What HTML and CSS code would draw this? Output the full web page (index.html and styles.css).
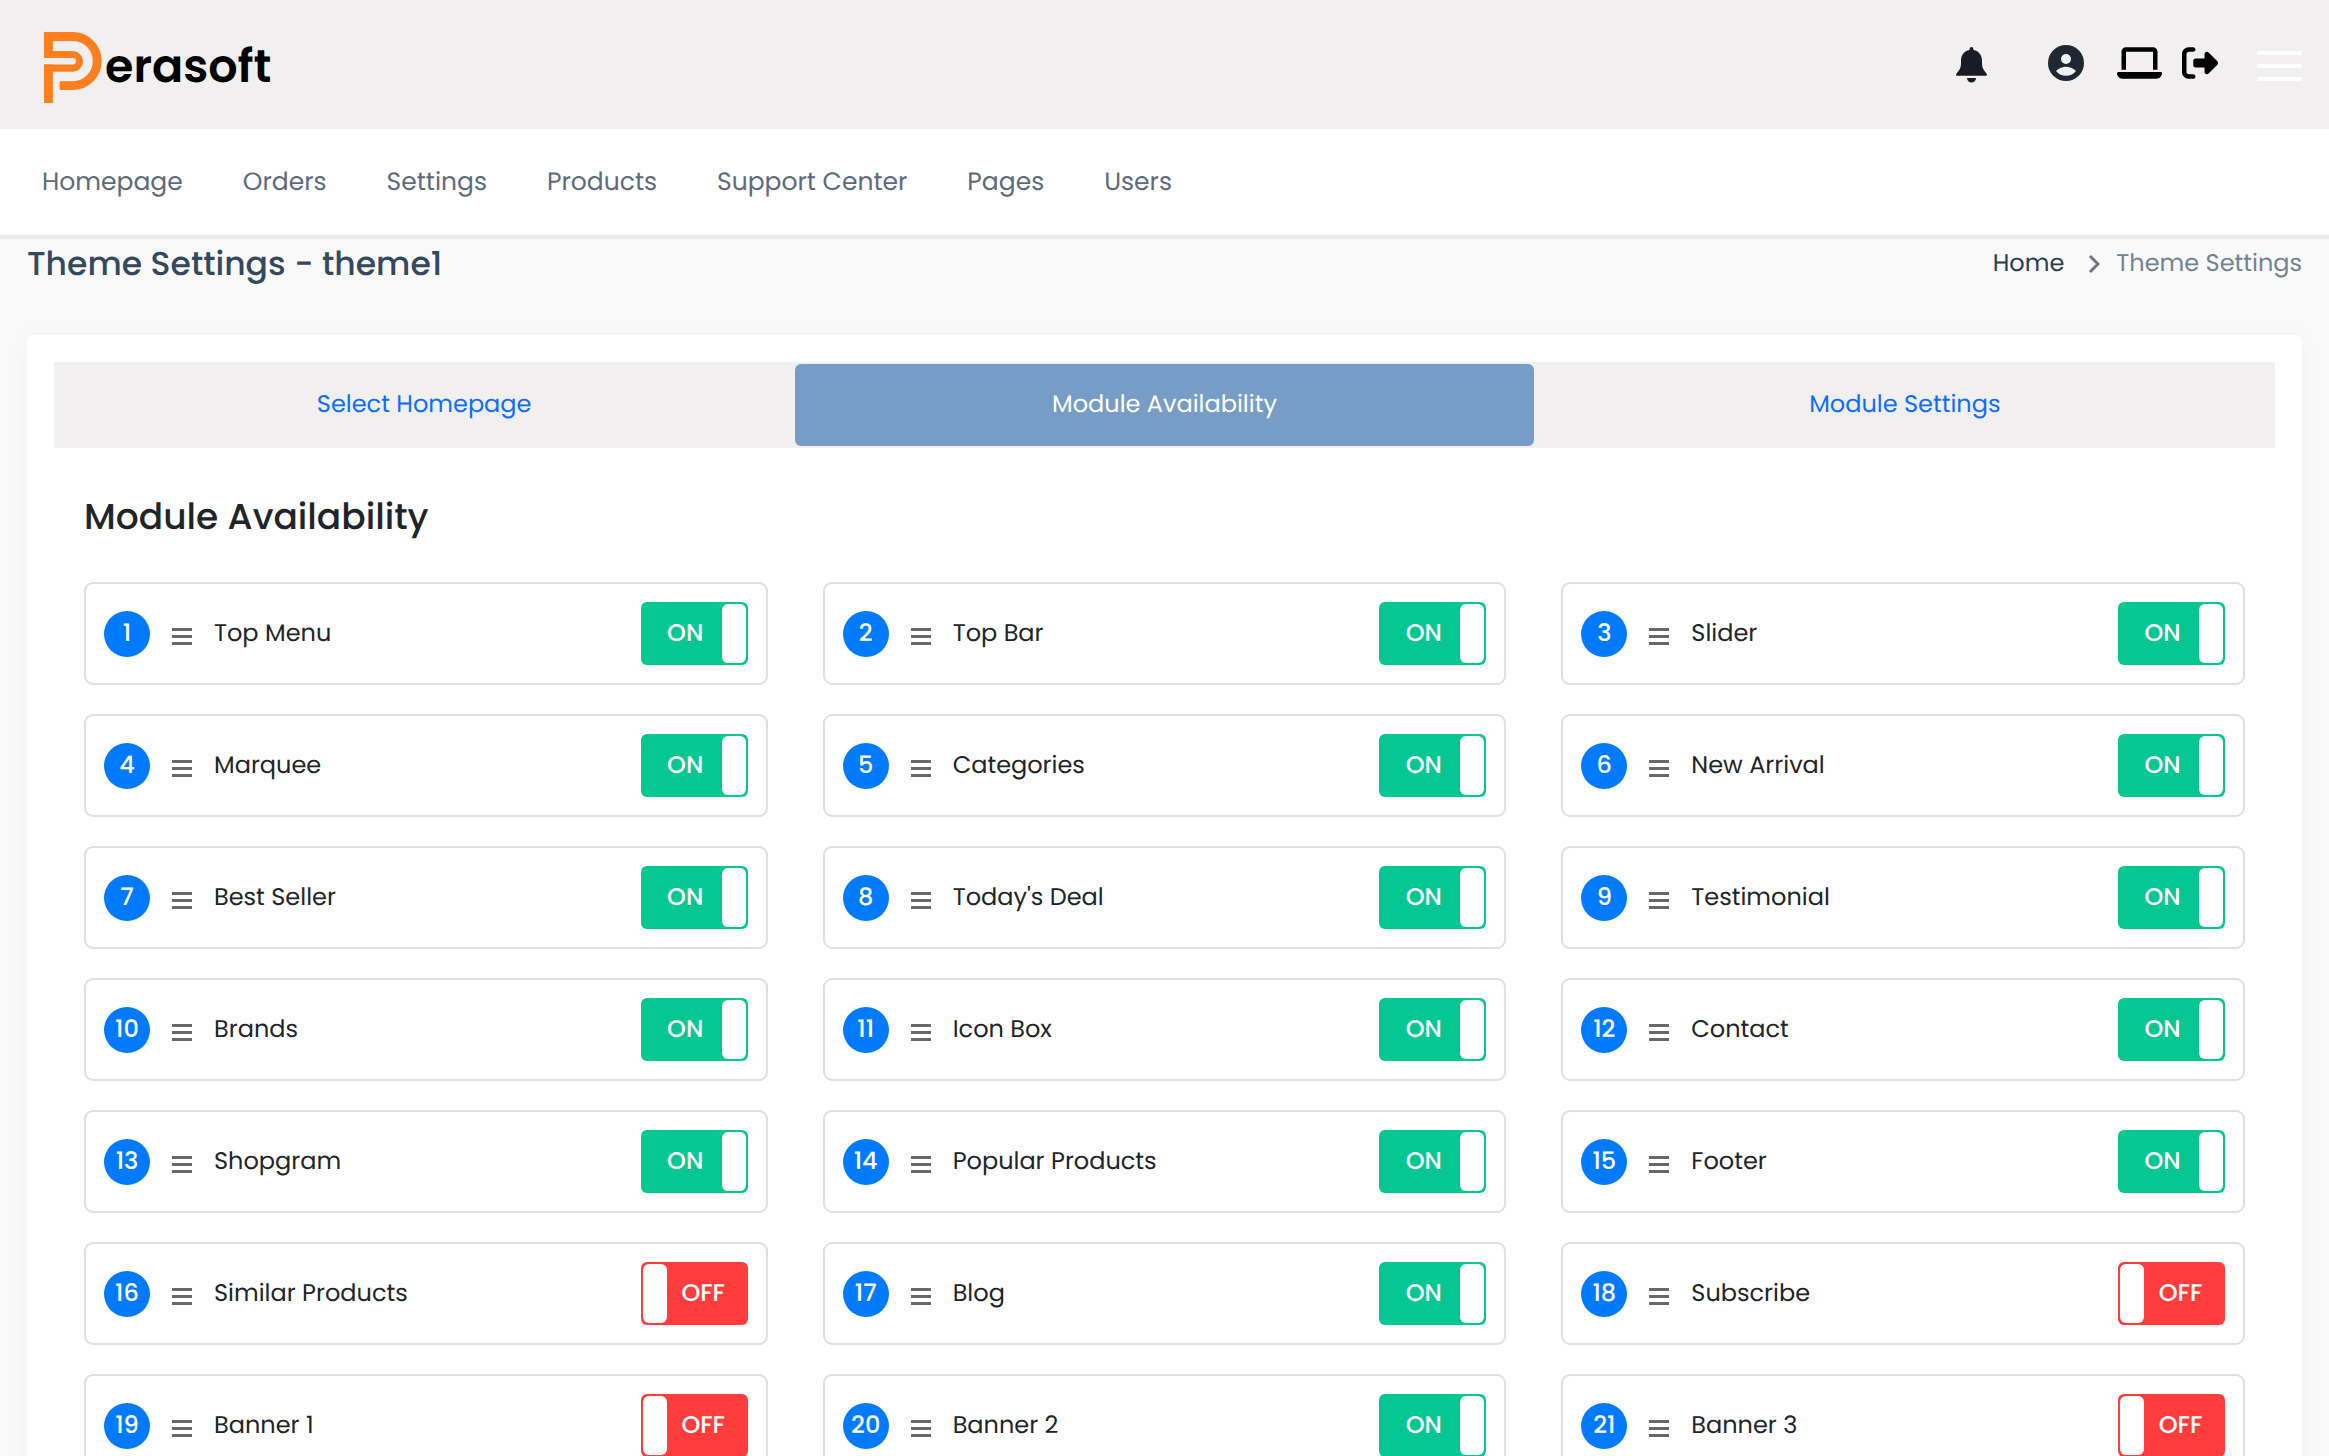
FILE: index.html
```html
<!DOCTYPE html>
<html lang="en">

<head>
  <meta charset="utf-8">
  <title>Theme Settings</title>
  <link rel="stylesheet" href="styles.css">
</head>

<body>
  <header class="topbar">
    <a class="logo" href="#">
      <svg class="logo-mark" viewBox="134 98 170 208" fill="none" stroke="#ff7f1e" aria-hidden="true">
        <path stroke-width="26" d="M147 174V111H218A72 72 0 0 1 218 255H180M147 193V306" />
        <path stroke-width="21" d="M134 164H218A20 20 0 0 1 218 204H134" />
      </svg>
      <span class="logo-text">erasoft</span>
    </a>
    <div class="topbar-icons">
      <a class="icon-bell" href="#" aria-label="Notifications">
        <svg width="31" height="36" viewBox="0 0 31 36" fill="#171c26">
          <path d="M15.500 0C14 0 13.500 1.500 13.500 3C8 4 5 8.500 5 14V17C5 21 3 23.500 1 26C-.5 27.500 0 28.700 1.500 28.700H29.500C31 28.700 31.500 27.500 30 26C28 23.500 26 21 26 17V14C26 8.500 23 4 17.500 3C17.500 1.500 17 0 15.500 0zM11 31H20C20 33.500 18 35.500 15.500 35.500S11 33.500 11 31z" />
        </svg>
      </a>
      <a class="icon-user" href="#" aria-label="Account">
        <svg width="36" height="36" viewBox="0 0 36 36">
          <circle cx="18" cy="18" r="18" fill="#1f2733" />
          <circle cx="18" cy="14" r="5" fill="#f1eff0" />
          <path d="M8 26C11 23 15 21.700 18 21.700S25 23 28 26C25 29.500 22 30.800 18 30.800S11 29.500 8 26z" fill="#f1eff0" />
        </svg>
      </a>
      <a class="icon-site" href="#" aria-label="View site">
        <svg width="45" height="36" viewBox="0 0 640 512">
          <path d="M128 32C92.700 32 64 60.700 64 96V352h64V96H512V352h64V96c0-35.300-28.700-64-64-64H128zM19.200 384C8.600 384 0 392.600 0 403.200C0 445.600 34.400 480 76.800 480H563.200c42.400 0 76.800-34.400 76.800-76.800c0-10.600-8.600-19.200-19.200-19.200H19.200z" />
        </svg>
      </a>
      <a class="icon-logout" href="#" aria-label="Log out">
        <svg width="36" height="36" viewBox="0 0 512 512">
          <path d="M377.900 105.900L500.700 228.700c7.200 7.200 11.300 17.100 11.300 27.300s-4.100 20.100-11.300 27.300L377.900 406.100c-6.400 6.400-15 9.900-24 9.900c-18.700 0-33.900-15.200-33.900-33.900l0-62.100-128 0c-17.700 0-32-14.300-32-32l0-64c0-17.700 14.300-32 32-32l128 0 0-62.100c0-18.700 15.200-33.900 33.900-33.900c9 0 17.600 3.600 24 9.900zM160 96L96 96c-17.700 0-32 14.300-32 32l0 256c0 17.700 14.300 32 32 32l64 0c17.700 0 32 14.300 32 32s-14.300 32-32 32l-64 0c-53 0-96-43-96-96L0 128C0 75 43 32 96 32l64 0c17.700 0 32 14.300 32 32s-14.300 32-32 32z" />
        </svg>
      </a>
      <button class="menu-toggle" type="button" aria-label="Menu">
        <span></span><span></span><span></span>
      </button>
    </div>
  </header>

  <nav class="main-nav">
    <a href="#">Homepage</a>
    <a href="#">Orders</a>
    <a href="#">Settings</a>
    <a href="#">Products</a>
    <a href="#">Support Center</a>
    <a href="#">Pages</a>
    <a href="#">Users</a>
  </nav>

  <main class="content">
    <div class="page-title">
      <h1>Theme Settings - theme1</h1>
      <div class="breadcrumb">
        <a href="#">Home</a>
        <svg width="12" height="20" viewBox="0 0 12 20" fill="none" stroke="#6f757d" stroke-width="3" aria-hidden="true">
          <path d="M2 2L10 10L2 18" />
        </svg>
        <span>Theme Settings</span>
      </div>
    </div>

    <section class="card">
      <div class="tabs">
        <button type="button">Select Homepage</button>
        <button type="button" class="active">Module Availability</button>
        <button type="button">Module Settings</button>
      </div>

      <div class="tab-content">
        <h2>Module Availability</h2>
        <div class="modules">
          <div class="module">
            <span class="number">1</span><span class="handle"></span><label class="name" for="m1">Top Menu</label>
            <label class="switch"><input type="checkbox" id="m1" checked><span class="on">ON</span><span class="off">OFF</span></label>
          </div>
          <div class="module">
            <span class="number">2</span><span class="handle"></span><label class="name" for="m2">Top Bar</label>
            <label class="switch"><input type="checkbox" id="m2" checked><span class="on">ON</span><span class="off">OFF</span></label>
          </div>
          <div class="module">
            <span class="number">3</span><span class="handle"></span><label class="name" for="m3">Slider</label>
            <label class="switch"><input type="checkbox" id="m3" checked><span class="on">ON</span><span class="off">OFF</span></label>
          </div>
          <div class="module">
            <span class="number">4</span><span class="handle"></span><label class="name" for="m4">Marquee</label>
            <label class="switch"><input type="checkbox" id="m4" checked><span class="on">ON</span><span class="off">OFF</span></label>
          </div>
          <div class="module">
            <span class="number">5</span><span class="handle"></span><label class="name" for="m5">Categories</label>
            <label class="switch"><input type="checkbox" id="m5" checked><span class="on">ON</span><span class="off">OFF</span></label>
          </div>
          <div class="module">
            <span class="number">6</span><span class="handle"></span><label class="name" for="m6">New Arrival</label>
            <label class="switch"><input type="checkbox" id="m6" checked><span class="on">ON</span><span class="off">OFF</span></label>
          </div>
          <div class="module">
            <span class="number">7</span><span class="handle"></span><label class="name" for="m7">Best Seller</label>
            <label class="switch"><input type="checkbox" id="m7" checked><span class="on">ON</span><span class="off">OFF</span></label>
          </div>
          <div class="module">
            <span class="number">8</span><span class="handle"></span><label class="name" for="m8">Today's Deal</label>
            <label class="switch"><input type="checkbox" id="m8" checked><span class="on">ON</span><span class="off">OFF</span></label>
          </div>
          <div class="module">
            <span class="number">9</span><span class="handle"></span><label class="name" for="m9">Testimonial</label>
            <label class="switch"><input type="checkbox" id="m9" checked><span class="on">ON</span><span class="off">OFF</span></label>
          </div>
          <div class="module">
            <span class="number">10</span><span class="handle"></span><label class="name" for="m10">Brands</label>
            <label class="switch"><input type="checkbox" id="m10" checked><span class="on">ON</span><span class="off">OFF</span></label>
          </div>
          <div class="module">
            <span class="number">11</span><span class="handle"></span><label class="name" for="m11">Icon Box</label>
            <label class="switch"><input type="checkbox" id="m11" checked><span class="on">ON</span><span class="off">OFF</span></label>
          </div>
          <div class="module">
            <span class="number">12</span><span class="handle"></span><label class="name" for="m12">Contact</label>
            <label class="switch"><input type="checkbox" id="m12" checked><span class="on">ON</span><span class="off">OFF</span></label>
          </div>
          <div class="module">
            <span class="number">13</span><span class="handle"></span><label class="name" for="m13">Shopgram</label>
            <label class="switch"><input type="checkbox" id="m13" checked><span class="on">ON</span><span class="off">OFF</span></label>
          </div>
          <div class="module">
            <span class="number">14</span><span class="handle"></span><label class="name" for="m14">Popular Products</label>
            <label class="switch"><input type="checkbox" id="m14" checked><span class="on">ON</span><span class="off">OFF</span></label>
          </div>
          <div class="module">
            <span class="number">15</span><span class="handle"></span><label class="name" for="m15">Footer</label>
            <label class="switch"><input type="checkbox" id="m15" checked><span class="on">ON</span><span class="off">OFF</span></label>
          </div>
          <div class="module">
            <span class="number">16</span><span class="handle"></span><label class="name" for="m16">Similar Products</label>
            <label class="switch"><input type="checkbox" id="m16"><span class="on">ON</span><span class="off">OFF</span></label>
          </div>
          <div class="module">
            <span class="number">17</span><span class="handle"></span><label class="name" for="m17">Blog</label>
            <label class="switch"><input type="checkbox" id="m17" checked><span class="on">ON</span><span class="off">OFF</span></label>
          </div>
          <div class="module">
            <span class="number">18</span><span class="handle"></span><label class="name" for="m18">Subscribe</label>
            <label class="switch"><input type="checkbox" id="m18"><span class="on">ON</span><span class="off">OFF</span></label>
          </div>
          <div class="module">
            <span class="number">19</span><span class="handle"></span><label class="name" for="m19">Banner 1</label>
            <label class="switch"><input type="checkbox" id="m19"><span class="on">ON</span><span class="off">OFF</span></label>
          </div>
          <div class="module">
            <span class="number">20</span><span class="handle"></span><label class="name" for="m20">Banner 2</label>
            <label class="switch"><input type="checkbox" id="m20" checked><span class="on">ON</span><span class="off">OFF</span></label>
          </div>
          <div class="module">
            <span class="number">21</span><span class="handle"></span><label class="name" for="m21">Banner 3</label>
            <label class="switch"><input type="checkbox" id="m21"><span class="on">ON</span><span class="off">OFF</span></label>
          </div>
        </div>
      </div>
    </section>
  </main>
</body>

</html>
```
FILE: styles.css
```css
* {
  box-sizing: border-box;
}

body {
  margin: 0;
  font-family: Poppins, Inter, sans-serif;
  font-size: 24px;
  line-height: 36px;
  color: #212529;
  background-color: #f9f9f9;
  text-rendering: geometricPrecision;
}

a {
  text-decoration: none;
}

button {
  font: inherit;
  text-rendering: inherit;
  border: 0;
  cursor: pointer;
}

svg {
  display: block;
}

/* header */
.topbar {
  display: flex;
  justify-content: space-between;
  padding: 32px 27px 26px 44px;
  background-color: #f1eff0;
}

.logo {
  display: flex;
  gap: 3px;
  color: black;
}

.logo-mark {
  width: 58px;
  height: 71px;
}

.logo-text {
  font-size: 46px;
  font-weight: 600;
  line-height: 70px;
}

.topbar-icons {
  display: flex;
  align-items: flex-start;
  padding-top: 13px;
}

.icon-bell {
  margin-right: 61px;
  padding-top: 2px;
}

.icon-user {
  margin-right: 33px;
}

.icon-site {
  margin-right: 20px;
}

.icon-logout {
  margin-right: 39px;
}

.menu-toggle {
  display: flex;
  flex-direction: column;
  gap: 9px;
  margin-top: 6px;
  padding: 0;
  background: none;
}

.menu-toggle span {
  width: 45px;
  height: 4px;
  background-color: #fdfdfd;
}

/* navigation */
.main-nav {
  display: flex;
  gap: 60px;
  padding: 35px 42px;
  font-size: 25px;
  background-color: white;
  border-bottom: 4px solid #ebebeb;
}

.main-nav a {
  color: #5f6b7c;
}

/* page title */
.content {
  padding: 0 27px 27px;
}

.page-title {
  display: flex;
  justify-content: space-between;
  align-items: center;
  margin-bottom: 46px;
}

h1 {
  margin: 0;
  font-size: 33px;
  font-weight: 500;
  line-height: 50px;
  color: #34495e;
}

.breadcrumb {
  display: flex;
  align-items: center;
  color: #748291;
}

.breadcrumb a {
  color: #2c3e50;
}

.breadcrumb svg {
  margin: 0 16px 0 24px;
}

.card {
  padding: 27px;
  background-color: white;
  border-radius: 6px;
  box-shadow: 0 0 24px rgba(0, 0, 0, 0.03);
}

/* tabs */
.tabs {
  display: grid;
  grid-template-columns: repeat(3, 1fr);
  gap: 2px;
  padding: 2px 1px;
  background-color: #f1eff0;
}

.tabs button {
  padding: 23px 12px;
  color: #0d6efd;
  background: none;
  border-radius: 6px;
}

.tabs .active {
  color: white;
  background-color: #779dc7;
}

.tab-content {
  padding: 42px 30px 30px;
}

h2 {
  margin: 0 0 38px;
  font-size: 36px;
  font-weight: 500;
  line-height: 54px;
}

/* modules */
.modules {
  display: grid;
  grid-template-columns: repeat(3, 1fr);
  gap: 29px 55px;
}

.module {
  display: flex;
  align-items: center;
  padding: 18px;
  border: 2px solid #dee0e1;
  border-radius: 9px;
}

.number {
  width: 46px;
  height: 46px;
  font-weight: 500;
  line-height: 46px;
  text-align: center;
  color: white;
  background-color: #007bff;
  border-radius: 50%;
}

.handle {
  width: 20px;
  height: 17px;
  margin: 5px 22px 0;
  background: repeating-linear-gradient(#696969 0 3px, transparent 3px 7px);
  cursor: move;
}

.name {
  flex: 1;
}

.switch {
  display: flex;
  width: 107px;
  height: 63px;
  padding: 2px;
  font-weight: 500;
  color: white;
  background-color: #ff3d3d;
  border-radius: 6px;
  cursor: pointer;
}

.switch input {
  appearance: none;
  width: 24px;
  margin: 0;
  background-color: white;
  border-radius: 6px;
}

.switch span {
  flex: 1;
  line-height: 60px;
  text-align: center;
}

.switch .off {
  padding-right: 6px;
}

.switch .on {
  display: none;
  padding-left: 6px;
}

.switch:has(input:checked) {
  flex-direction: row-reverse;
  background-color: #06c791;
}

.switch input:checked ~ .on {
  display: block;
}

.switch input:checked ~ .off {
  display: none;
}
```
